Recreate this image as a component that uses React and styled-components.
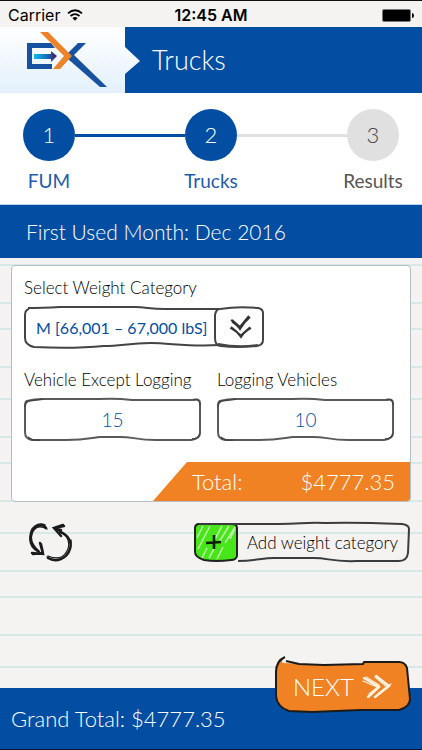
import React, { useState } from "react";
import styled, { createGlobalStyle } from "styled-components";

const blue = "#034ea2";
const orange = "#f08223";

const GlobalStyle = createGlobalStyle`
  * { box-sizing: border-box; }
  body { margin: 0; background: #f4f3f2; }
  button, input, select { font: inherit; color: inherit; }
`;

const Page = styled.div`
  min-height: 100vh;
  display: flex;
  flex-direction: column;
  border-top: 1px solid #111;
  border-bottom: 1px solid #0a1a33;
  font-family: Lato, "Open Sans", sans-serif;
  font-weight: 300;
  color: #111;
`;

const StatusBar = styled.div`
  display: grid;
  grid-template-columns: 1fr auto 1fr;
  align-items: center;
  height: 26px;
  padding: 2px 8px 0;
  background: #f4f3f2;
  color: #000;
  font-family: Inter, "Liberation Sans", sans-serif;
  font-size: 16px;
  font-weight: 400;
`;

const Carrier = styled.span`
  display: flex;
  align-items: center;
  gap: 7px;
`;

const Clock = styled.time`
  font-size: 16px;
  font-weight: 600;
`;

const Battery = styled.svg`
  justify-self: end;
`;

const Header = styled.header`
  display: flex;
  align-items: center;
  height: 66px;
  background: ${blue};
  color: #fff;
`;

const LogoPanel = styled.div`
  width: 140px;
  height: 66px;
  padding-left: 25px;
  background: linear-gradient(#fff, #e3f0fb);
  clip-path: polygon(0 0, 125px 0, 125px 20px, 140px 34px, 125px 47px, 125px 100%, 0 100%);
`;

const Title = styled.h1`
  margin: 0 0 0 12px;
  font-size: 27px;
  line-height: 34px;
  font-weight: 300;
`;

const Stepper = styled.ol`
  display: flex;
  margin: 0;
  padding: 16px 23px 10px;
  list-style: none;
  background: #fff;
  border-bottom: 1px solid #b9d5f3;
`;

const Step = styled.li`
  display: flex;
  flex-direction: column;
  align-items: center;
  gap: 7px;
  width: 52px;
  color: ${(p) => (p.$done ? "#1f5cab" : "#555")};
  font-size: 19px;
  line-height: 26px;
  font-weight: 400;
  white-space: nowrap;
`;

const StepNumber = styled.span`
  display: grid;
  place-items: center;
  width: 52px;
  height: 52px;
  border-radius: 50%;
  background: ${(p) => (p.$done ? blue : "#e0e0e0")};
  color: ${(p) => (p.$done ? "#fff" : "#444")};
  font-size: 22px;
  font-weight: 300;
`;

const Connector = styled.li`
  flex: 1;
  height: 3px;
  margin-top: 25px;
  background: ${(p) => (p.$done ? blue : "#e0e0e0")};
`;

const Banner = styled.h2`
  margin: 0;
  padding: 9px 26px;
  background: ${blue};
  color: #fff;
  font-size: 21px;
  line-height: 35px;
  font-weight: 300;
`;

const Paper = styled.main`
  flex: 1;
  padding: 7px 11px 60px;
  background:
    repeating-linear-gradient(
      transparent 0 6px, #d5e9e7 6px 8px,
      transparent 8px 44px, #d5e9e7 44px 46px,
      transparent 46px 70px, #d5e9e7 70px 72px,
      transparent 72px 108px, #d5e9e7 108px 110px,
      transparent 110px 134px
    ),
    #f4f3f2;
`;

const Card = styled.section`
  overflow: hidden;
  background: #fff;
  border: 1px solid #b3bfc2;
  border-radius: 4px;
`;

const Fields = styled.div`
  display: grid;
  grid-template-columns: 1fr 1fr;
  column-gap: 16px;
  row-gap: 18px;
  padding: 8px 16px 21px 12px;
`;

const Field = styled.div`
  grid-column: ${(p) => (p.$wide ? "1 / -1" : "auto")};
`;

const Label = styled.label`
  display: block;
  height: 32px;
  color: #000;
  font-size: 17px;
  line-height: 28px;
  white-space: nowrap;
`;

const ControlFrame = styled.div`
  position: relative;
  height: ${(p) => (p.$select ? "42px" : "43px")};
  max-width: ${(p) => (p.$select ? "240px" : "none")};
`;

const Outline = styled.svg`
  position: absolute;
  inset: 0;
  width: 100%;
  height: 100%;
  overflow: visible;
  pointer-events: none;
`;

const WeightSelect = styled.select`
  width: 100%;
  height: 100%;
  padding: 0 48px 0 12px;
  appearance: none;
  border: 0;
  background: transparent;
  color: #034ea2;
  font-size: 16px;
  font-weight: 400;
`;

const CountInput = styled.input`
  width: 100%;
  height: 100%;
  padding: 0 12px;
  border: 0;
  background: transparent;
  color: #034ea2;
  font-size: 19px;
  font-weight: 300;
  text-align: center;
`;

const Chevrons = styled.svg`
  position: absolute;
  right: 11px;
  top: 8px;
  pointer-events: none;
`;

const TotalBar = styled.div`
  display: flex;
  justify-content: space-between;
  margin-left: 141px;
  padding: 3px 15px 3px 39px;
  background: ${orange};
  clip-path: polygon(34px 0, 100% 0, 100% 100%, 0 100%);
  color: #fff;
  font-size: 22px;
  line-height: 33px;
`;

const Actions = styled.div`
  display: flex;
  justify-content: space-between;
  align-items: center;
  margin-top: 20px;
  padding: 0 1px 0 17px;
`;

const IconButton = styled.button`
  display: flex;
  padding: 0;
  border: 0;
  background: transparent;
  cursor: pointer;
`;

const AddButton = styled.button`
  position: relative;
  display: flex;
  align-items: center;
  width: 216px;
  height: 40px;
  padding: 0;
  border: 0;
  background: transparent;
  color: #000;
  font-size: 17px;
  cursor: pointer;
`;

const AddText = styled.span`
  flex: 1;
  padding-right: 4px;
  text-align: center;
  white-space: nowrap;
`;

const Footer = styled.footer`
  position: relative;
  padding: 13px 11px 12px;
  background: ${blue};
  color: #fff;
  font-size: 22px;
  line-height: 36px;
`;

const NextButton = styled.button`
  position: absolute;
  right: 11px;
  top: -32px;
  display: flex;
  align-items: center;
  gap: 8px;
  width: 136px;
  height: 58px;
  padding: 4px 0 0 18px;
  border: 0;
  background: transparent;
  color: #fff;
  font-size: 24px;
  cursor: pointer;
`;

const Front = styled.span`
  position: relative;
  display: flex;
`;

function Logo() {
  return (
    <svg width="90" height="66" viewBox="25 27 90 66" role="img" aria-label="EX">
      <defs>
        <linearGradient id="arrow" x1="0" x2="1">
          <stop offset="0" stopColor="#12bdf0" />
          <stop offset=".6" stopColor="#1767b4" />
          <stop offset="1" stopColor="#4b1560" />
        </linearGradient>
      </defs>
      <path d="M27 43h24l4 5H32v16h20v5H27z" fill="#1752a0" />
      <path d="M34 54h17v-3l6 5-6 6v-3H34z" fill="url(#arrow)" />
      <path d="M78 43h8L74 55l33 32h-7L68 59v-6z" fill="#1752a0" />
      <path d="M40 32h8l24 24-12 13h-7l11-13z" fill="#ee8228" />
    </svg>
  );
}

function Wifi() {
  return (
    <svg width="16" height="12" viewBox="0 0 16 12" aria-label="Wi-Fi">
      <path d="M1 4.4q7-6.2 14 0M3.5 7q4.5-3.8 9 0" fill="none" stroke="#000" strokeWidth="1.8" />
      <path d="M5.4 8.9q2.6-2 5.2 0L8 11.8z" />
    </svg>
  );
}

function SketchBox() {
  return (
    <Outline viewBox="0 0 177 43" preserveAspectRatio="none" aria-hidden="true">
      <path
        d="M3 3q7-2 17-2h55q17-1 33 1h60q8-2 8 3v30q0 6-9 7h-35c-22 0-24-4-40-3H76c-14 2-18 3-34 3H8q-7-1-7-8V8q0-4 2-5z"
        fill="none"
        stroke="#5a5a5a"
        strokeWidth="2"
        strokeLinejoin="round"
      />
      <path d="M1 9q0-5 4-6l14-2M169 2q7-2 7 5M4 39q4 4 12 3M176 35q-1 6-8 6" fill="none" stroke="#444" strokeWidth="1.4" />
    </Outline>
  );
}

function SketchSelect() {
  return (
    <Outline viewBox="0 0 240 42" preserveAspectRatio="none" aria-hidden="true">
      <g fill="none" stroke="#444" strokeWidth="2" strokeLinejoin="round">
        <path d="M4 2q14 0 32-1h75c12 0 14 2 30 2h54M195 39c-30 2-49-2-68-2-23 0-29 3-47 3-21 2-50 2-70 1q-9-2-9-9V9q0-5 4-6" />
        <path d="M196 3q18-3 38-1 5 1 5 5v27q0 5-6 6-20 2-36 0-6 0-6-8V9q1-6 5-6zM194 38q20 4 40 1" />
      </g>
    </Outline>
  );
}

function DownMarks() {
  return (
    <Chevrons width="24" height="26" viewBox="0 0 24 26" aria-hidden="true">
      <g fill="none" stroke="#333" strokeWidth="2">
        <path d="M2 6q5 3 9 9 4-7 10-12M3 6l8 7L20 2M2 13q6 4 10 10 3-5 10-9" />
        <path d="M1 14l11 7 9-8M3 8l8 6" strokeWidth="1.4" />
      </g>
    </Chevrons>
  );
}

function RefreshMarks() {
  return (
    <svg width="44" height="40" viewBox="28 521 44 40" aria-hidden="true">
      <g fill="none" stroke="#1b1b1b" strokeLinecap="round">
        <path d="M46 527c-4-6-13-2-15 7-2 7 1 13 8 17" strokeWidth="2.4" />
        <path d="M47 528c-5-3-10-4-14 2-4 8-1 14 6 20M45 524c-7-3-15 2-15 12 0 7 3 11 9 15" strokeWidth="1.4" />
        <path d="M32 552l11 1-3-11M33 553l9-1M41 543l2 9" strokeWidth="2.4" />
        <path d="M60 531c9 3 12 11 10 17-3 10-14 14-22 9" strokeWidth="2.4" />
        <path d="M60 530c8 4 11 13 7 20-4 8-12 8-19 5M71 539c1 9-4 17-11 19q-7 2-13-2" strokeWidth="1.3" />
        <path d="M64 525l-10 2 7 8M54 527l9-3M55 528l6 1" strokeWidth="2.4" />
      </g>
    </svg>
  );
}

function SketchAdd() {
  return (
    <>
      <Outline viewBox="0 0 216 40" preserveAspectRatio="none" aria-hidden="true">
        <path
          d="M5 2h80c22 0 27-2 46-1 27-1 52 0 77 1q7 1 7 5l-1 24q-1 8-9 8h-42c-26 1-28-3-43-3H80c-12 0-19 3-36 3"
          fill="none" stroke="#3b3b3b" strokeWidth="2"
        />
      </Outline>
      <svg width="45" height="40" viewBox="0 0 45 40" aria-hidden="true">
        <path d="M4 2h34q5 0 5 4v28q-1 4-6 4-15 2-27 0-9-3-9-8V6q0-3 3-4z" fill="#47e619" stroke="#222" strokeWidth="2" />
        <path d="M3 16L9 4M4 27L16 4M21 17L28 4M25 20l10-16M31 21l10-16M8 36l5-10M15 36l6-11M23 37l6-12M36 17l5-10" stroke="#b8f5a5" strokeWidth="1.6" />
        <path d="M12 21l15-1M20 13v14" stroke="#071f05" strokeWidth="2.6" />
      </svg>
    </>
  );
}

function SketchNext() {
  return (
    <Outline viewBox="275 656 136 58" preserveAspectRatio="none" aria-hidden="true">
      <path
        d="M285 657q-9 4-9 15v24q1 11 13 15l23 1 49-2 38 0q11-3 11-11l-3-31q-2-6-8-6h-35l-1 2-39 1-40-2q-4 0 0-5z"
        fill={orange}
      />
      <path
        d="M285 657q-9 4-9 15v24q1 11 13 15l23 1 49-2 38 0q11-3 11-11l-3-31q-2-6-8-6h-35l-1 2-39 1-25-1-13-3"
        fill="none" stroke="#1b1b1b" strokeWidth="2" strokeLinejoin="round"
      />
    </Outline>
  );
}

function RightMarks() {
  return (
    <svg width="31" height="26" viewBox="0 0 31 26" aria-hidden="true">
      <g fill="none" stroke="#fff3e3" strokeLinecap="round">
        <path d="M2 4l15 9L6 23M14 2l13 10-14 11" strokeWidth="2.4" />
        <path d="M1 7l14 6M4 3l13 8M7 20l10-8M13 3l12 10M14 22l15-12M17 19l10-8" strokeWidth="1.2" />
      </g>
    </svg>
  );
}

export default function App() {
  const [vehicles, setVehicles] = useState("15");
  const [logging, setLogging] = useState("10");

  return (
    <>
      <GlobalStyle />
      <Page>
        <StatusBar>
          <Carrier>Carrier <Wifi /></Carrier>
          <Clock>12:45 AM</Clock>
          <Battery width="32" height="13" viewBox="0 0 32 13" aria-label="Battery full">
            <rect width="29" height="13" rx="2" fill="#777" />
            <rect x="1" y="1" width="27" height="11" rx="1" />
            <path d="M30 4q2 0 2 2.500t-2 2.500z" />
          </Battery>
        </StatusBar>
        <Header>
          <LogoPanel><Logo /></LogoPanel>
          <Title>Trucks</Title>
        </Header>
        <Stepper>
          <Step $done><StepNumber $done>1</StepNumber>FUM</Step>
          <Connector $done aria-hidden="true" />
          <Step $done aria-current="step"><StepNumber $done>2</StepNumber>Trucks</Step>
          <Connector aria-hidden="true" />
          <Step><StepNumber>3</StepNumber>Results</Step>
        </Stepper>
        <Banner>First Used Month: Dec 2016</Banner>
        <Paper>
          <Card>
            <Fields>
              <Field $wide>
                <Label htmlFor="weight">Select Weight Category</Label>
                <ControlFrame $select>
                  <WeightSelect id="weight">
                    <option>M [66,001 – 67,000 lbS]</option>
                  </WeightSelect>
                  <SketchSelect />
                  <DownMarks />
                </ControlFrame>
              </Field>
              <Field>
                <Label htmlFor="except">Vehicle Except Logging</Label>
                <ControlFrame>
                  <CountInput id="except" inputMode="numeric" value={vehicles} onChange={(e) => setVehicles(e.target.value)} />
                  <SketchBox />
                </ControlFrame>
              </Field>
              <Field>
                <Label htmlFor="logging">Logging Vehicles</Label>
                <ControlFrame>
                  <CountInput id="logging" inputMode="numeric" value={logging} onChange={(e) => setLogging(e.target.value)} />
                  <SketchBox />
                </ControlFrame>
              </Field>
            </Fields>
            <TotalBar><span>Total:</span><span>$4777.35</span></TotalBar>
          </Card>
          <Actions>
            <IconButton type="button" aria-label="Reset"><RefreshMarks /></IconButton>
            <AddButton type="button"><SketchAdd /><AddText>Add weight category</AddText></AddButton>
          </Actions>
        </Paper>
        <Footer>
          Grand Total: $4777.35
          <NextButton type="button">
            <SketchNext />
            <Front>NEXT</Front>
            <Front><RightMarks /></Front>
          </NextButton>
        </Footer>
      </Page>
    </>
  );
}
